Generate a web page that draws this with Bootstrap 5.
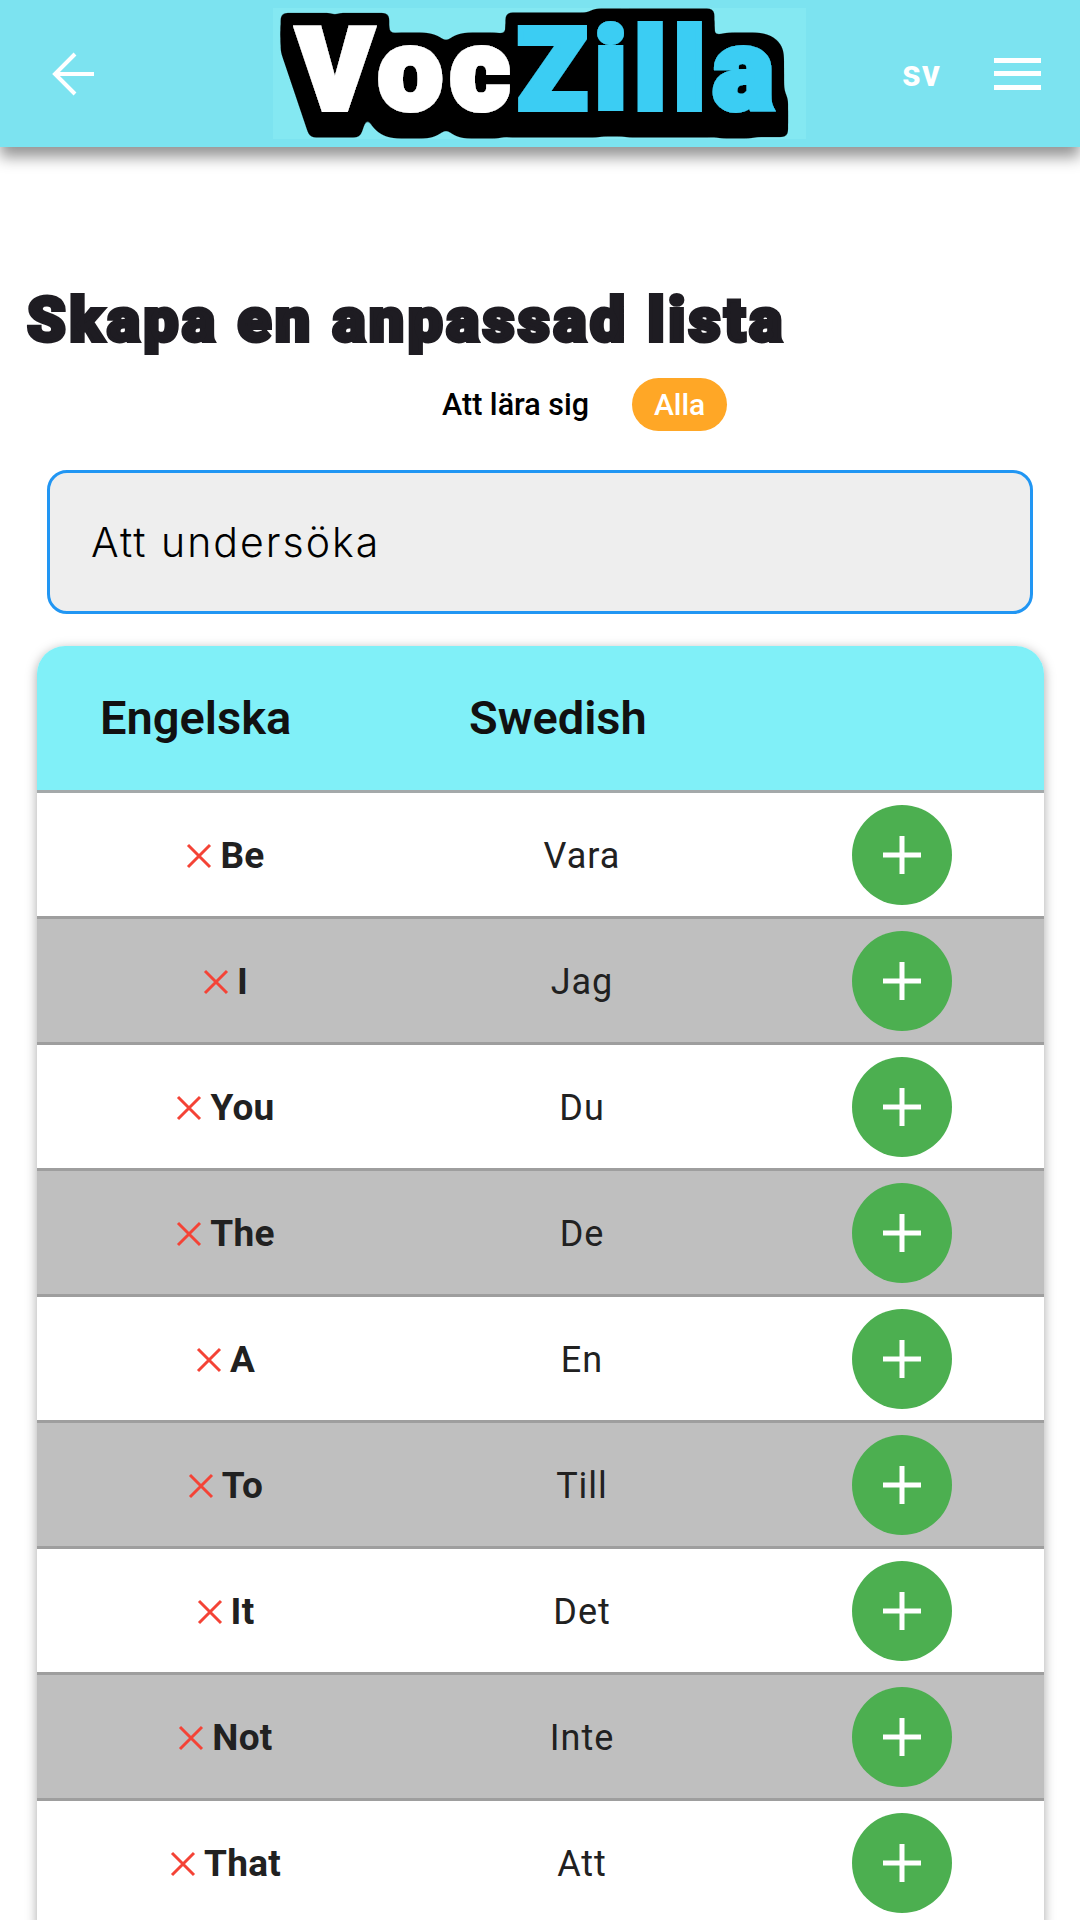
<!DOCTYPE html>
<html lang="sv">
<head>
  <meta charset="UTF-8" />
  <meta name="viewport" content="width=device-width, initial-scale=1.0" />
  <title>VocZilla</title>
  <link href="https://cdn.jsdelivr.net/npm/bootstrap@5.3.0/dist/css/bootstrap.min.css" rel="stylesheet" />
  <style>
    html, body { height: 1920px; overflow: hidden; }
    body { font-family: Roboto, "Liberation Sans", sans-serif; color: #212121; background: #fff; }
    .app-bar { height: 147px; background: #7ce3f0; box-shadow: 0 10px 14px rgba(0,0,0,.42); padding: 0 39px 0 52px; }
    .logo-box { flex: none; width: 533px; height: 131px; margin-left: 179px; background: #84e8f2; }
    .logo-word { font-weight: 900; font-size: 114px; line-height: 1; letter-spacing: 8px; color: #fff; -webkit-text-stroke: 6px currentColor; filter: url(#logoOutline); margin-top: -8px; }
    .logo-word span { color: #3bcdf3; }
    .lang-code { font-weight: 700; font-size: 36px; letter-spacing: 1px; color: #fff; margin-left: auto; margin-right: 53px; }
    .page-title { font-weight: 900; font-size: 62px; line-height: 70px; letter-spacing: 3.6px; color: #1e1c22; -webkit-text-stroke: 4px currentColor; margin: 138px 0 0 27px; white-space: nowrap; }
    .level-row { margin: 23px 0 0 442px; height: 53px; }
    .level-label { font-weight: 500; font-size: 30.5px; color: #000; margin-right: 43px; }
    .level-pill { width: 95px; height: 53px; border-radius: 27px; background: #ffa726; color: #fff; font-weight: 500; font-size: 30px; }
    .search-box { display: block; width: 986px; height: 144px; margin: 39px 0 0 47px; padding: 0 41px; border: 3px solid #2196f3; border-radius: 20px; background: #eee; font-family: Inter, sans-serif; font-weight: 300; font-size: 41px; letter-spacing: 2px; color: #000; }
    .search-box::placeholder { color: #000; opacity: 1; }
    .word-card { width: 1007px; margin: 32px 0 0 37px; border-radius: 28px 28px 0 0; overflow: hidden; box-shadow: 0 3px 12px rgba(0,0,0,.35); }
    .word-table { width: 1007px; table-layout: fixed; border-collapse: separate; border-spacing: 0; }
    .word-table th { height: 147px; background: #80f0f8; border-bottom: 3px solid #a4a9aa; font-weight: 600; font-size: 47px; color: #111; vertical-align: middle; }
    .word-table td { height: 126px; border-bottom: 3px solid #9e9e9e; text-align: center; vertical-align: middle; font-size: 36px; letter-spacing: 1px; padding: 0; }
    .word-table td.word-cell { padding-top: 2px; }
    .word-table tr:nth-child(even) td { background: #bfbfbf; }
    .word-table b { font-weight: 700; font-size: 37px; letter-spacing: .3px; }
    .th-en { padding-left: 63px; }
    .th-sv { padding-left: 56px; }
    .x-icon { width: 28px; height: 28px; margin-right: 7px; vertical-align: -2px; }
    .add-btn { width: 100px; height: 100px; padding: 0; margin-left: 8px; border: 0; background: #4caf50; }
  </style>
</head>
<body>
  <svg width="0" height="0" class="position-absolute">
    <filter id="logoOutline" x="-10%" y="-20%" width="120%" height="160%">
      <feMorphology in="SourceAlpha" operator="dilate" radius="12" result="fat" />
      <feGaussianBlur in="fat" stdDeviation="3" />
      <feComponentTransfer result="ring"><feFuncA type="linear" slope="8" intercept="-3" /></feComponentTransfer>
      <feOffset in="ring" dy="7" result="d1" />
      <feOffset in="ring" dy="13" result="d2" />
      <feMerge>
        <feMergeNode in="ring" />
        <feMergeNode in="d1" />
        <feMergeNode in="d2" />
        <feMergeNode in="SourceGraphic" />
      </feMerge>
    </filter>
  </svg>

  <header class="app-bar d-flex align-items-center">
    <svg width="42" height="44" viewBox="0 0 42 44" fill="none" stroke="#fff" stroke-width="4"><path d="M42 22H3M23 2 3 22l20 20" /></svg>
    <div class="logo-box d-flex justify-content-center align-items-center">
      <div class="logo-word">Voc<span>Zilla</span></div>
    </div>
    <div class="lang-code">sv</div>
    <svg width="47" height="32" viewBox="0 0 47 32" fill="#fff"><rect width="47" height="5" /><rect y="13" width="47" height="5" /><rect y="27" width="47" height="5" /></svg>
  </header>

  <main>
    <h1 class="page-title">Skapa en anpassad lista</h1>
    <div class="level-row d-flex align-items-center">
      <span class="level-label">Att lära sig</span>
      <span class="level-pill d-flex align-items-center justify-content-center">Alla</span>
    </div>
    <input class="search-box" type="text" placeholder="Att undersöka" />

    <div class="word-card">
      <table class="word-table">
        <colgroup><col style="width:376px" /><col style="width:338px" /><col style="width:293px" /></colgroup>
        <thead>
          <tr><th class="th-en">Engelska</th><th class="th-sv">Swedish</th><th></th></tr>
        </thead>
        <tbody id="rows"></tbody>
      </table>
    </div>
  </main>

  <script src="https://cdn.jsdelivr.net/npm/bootstrap@5.3.0/dist/js/bootstrap.bundle.min.js"></script>
  <script>
    const words = [["Be","Vara"],["I","Jag"],["You","Du"],["The","De"],["A","En"],["To","Till"],["It","Det"],["Not","Inte"],["That","Att"]];
    const xIcon = '<svg class="x-icon" viewBox="0 0 28 28" fill="none" stroke="#f44336" stroke-width="3"><path d="M3 3l22 22M25 3 3 25" /></svg>';
    const plusIcon = '<svg width="38" height="38" viewBox="0 0 38 38" fill="none" stroke="#fff" stroke-width="5"><path d="M19 0v38M0 19h38" /></svg>';
    document.getElementById("rows").innerHTML = words.map(function (w) {
      return '<tr><td class="word-cell">' + xIcon + '<b>' + w[0] + '</b></td><td class="word-cell">' + w[1] + '</td><td><button class="btn add-btn rounded-circle" type="button">' + plusIcon + '</button></td></tr>';
    }).join("");
  </script>
</body>
</html>
